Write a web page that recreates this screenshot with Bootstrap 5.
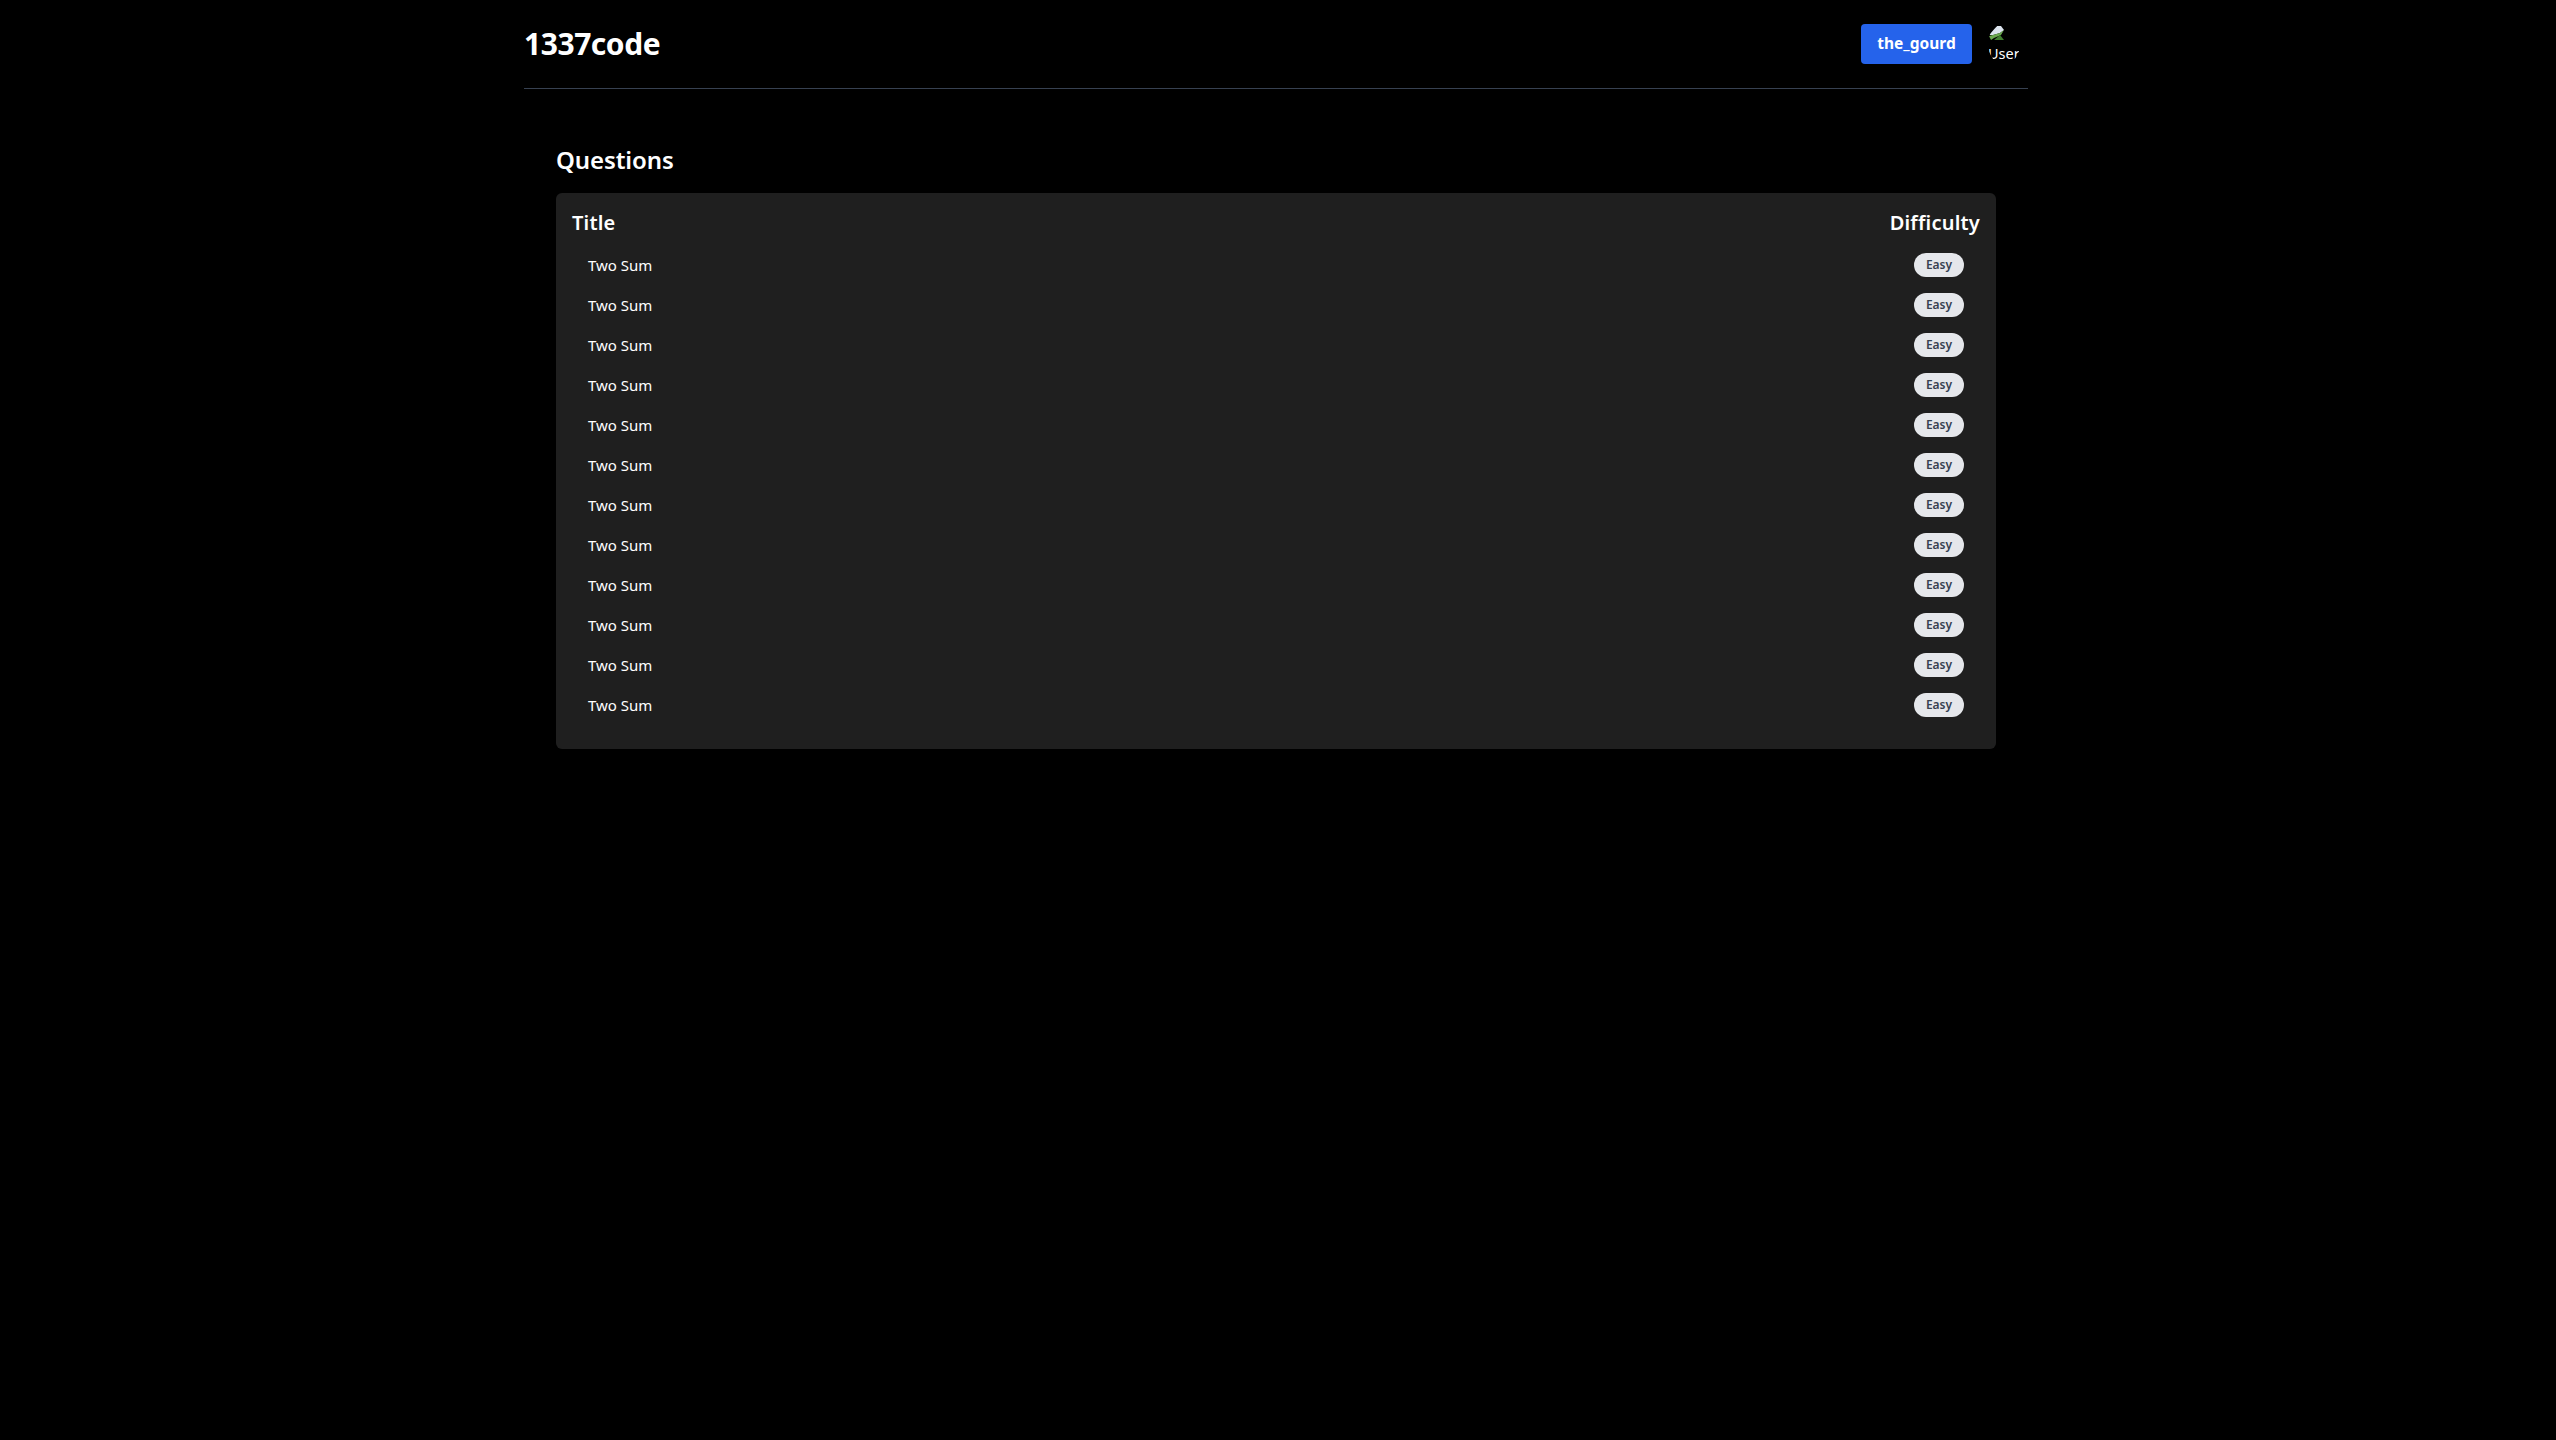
<!DOCTYPE html>
<html lang="en">
<head>
    <meta charset="UTF-8">
    <meta name="viewport" content="width=device-width, initial-scale=1.0">
    <title>1337code</title>
    <link href="https://cdn.jsdelivr.net/npm/bootstrap@5.3.0/dist/css/bootstrap.min.css" rel="stylesheet">
    <style>
        body { background: #000; color: #fff; font-family: "Noto Sans", "Open Sans", sans-serif; min-height: 100vh; }
        .page-wrap { width: 1504px; margin-left: 524px; }
        .top-bar { height: 89px; border-bottom: 1px solid #374151; }
        .logo { font-size: 30px; font-weight: 700; line-height: 36px; letter-spacing: -0.45px; }
        .user-btn { background: #2563eb; color: #fff; font-size: 15.5px; font-weight: 700; height: 40px; width: 111px; border: 0; border-radius: 4px; padding: 0; }
        .user-btn:hover { background: #2563eb; color: #fff; }
        .avatar { width: 32px; height: 40px; border-radius: 50%; overflow: hidden; font-size: 14.5px; line-height: 20px; margin: 0 8px 0 16px; }
        .avatar svg { display: block; margin: 2px 0 3px 1px; }
        .content { padding: 0 32px; }
        .page-title { font-size: 24px; font-weight: 600; line-height: 32px; margin: 55px 0 17px; letter-spacing: -0.1px; }
        .q-card { background: #1f1f1f; border-radius: 6px; padding: 16px 16px 24px; }
        .q-head { font-size: 20px; font-weight: 600; line-height: 28px; margin-bottom: 8px; letter-spacing: 0.2px; }
        .q-row { height: 40px; padding: 0 16px; font-size: 15px; }
        .level { background: #e5e7eb; color: #374151; font-size: 12px; font-weight: 600; width: 50px; height: 24px; border-radius: 12px; }
    </style>
</head>
<body>
    <div class="page-wrap">
        <!-- Header -->
        <header class="top-bar d-flex align-items-center justify-content-between">
            <div class="logo">1337code</div>
            <div class="d-flex align-items-center">
                <button type="button" class="btn user-btn">the_gourd</button>
                <div class="avatar">
                    <svg width="16" height="14" viewBox="0 0 16 14"><path d="M0 9 L8 0 L12 0 L15 4 L11 7 L4 9 Z" fill="#dce4ee"/><path d="M0 10 L4 9 L11 7 L15 4 L12 9 L5 12 L2 14 Z" fill="#6aa84f"/><path d="M5 14 L11 9 L15 14 Z" fill="#3f7d2e"/></svg>
                    <div class="alt-text">User</div>
                </div>
            </div>
        </header>

        <!-- Questions -->
        <section class="content">
            <h2 class="page-title">Questions</h2>
            <div class="q-card">
                <div class="q-head d-flex justify-content-between">
                    <span>Title</span>
                    <span>Difficulty</span>
                </div>
                <div id="rows"></div>
            </div>
        </section>
    </div>

    <script src="https://cdn.jsdelivr.net/npm/bootstrap@5.3.0/dist/js/bootstrap.bundle.min.js"></script>
    <script>
        let html = "";
        for (let i = 0; i < 12; i++) {
            html += '<div class="q-row d-flex align-items-center justify-content-between"><span>Two Sum</span><span class="level d-flex align-items-center justify-content-center">Easy</span></div>';
        }
        document.getElementById("rows").innerHTML = html;
    </script>
</body>
</html>
